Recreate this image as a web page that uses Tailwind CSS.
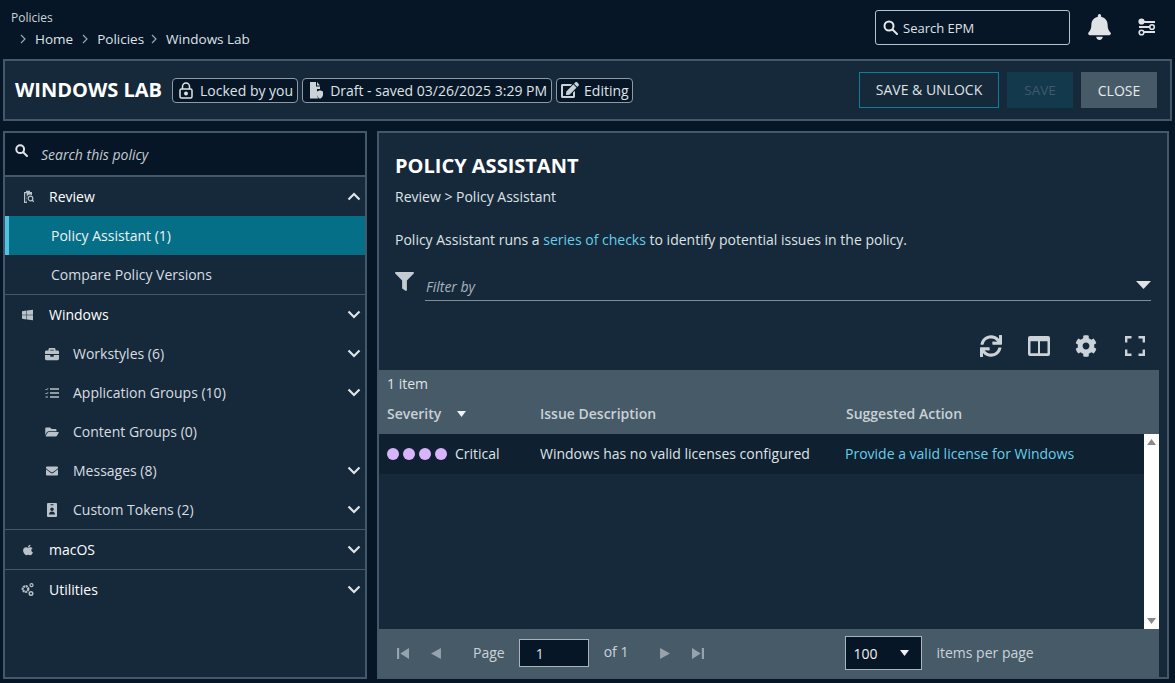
<!DOCTYPE html>
<html lang="en">
  <head>
    <script src="https://cdn.jsdelivr.net/npm/@tailwindcss/browser@4"></script>
    <meta charset="UTF-8" />
    <title>Windows Lab</title>
  </head>
  <body class="bg-[#061626] text-[14px] text-[#dfe3e6] overflow-hidden" style="font-family: 'Open Sans', sans-serif">
    <div class="w-[1175px] h-[683px] flex flex-col">
      <!-- top bar -->
      <div class="h-[59px] shrink-0 flex justify-between">
        <div class="pl-[11px] pt-[9px]">
          <div class="text-[12px] leading-[18px] text-[#ccd3d8]">Policies</div>
          <div class="flex items-center h-[20px] mt-[2px] pl-[8px] text-[13.500px]">
            <svg class="w-[8px] h-[10px] mr-[8px]" viewBox="0 0 8 10" fill="none" stroke="#9aa6af" stroke-width="1.2"><path d="M2 1l4 4-4 4"/></svg>
            <span>Home</span>
            <svg class="w-[8px] h-[10px] mx-[8px]" viewBox="0 0 8 10" fill="none" stroke="#9aa6af" stroke-width="1.2"><path d="M2 1l4 4-4 4"/></svg>
            <span>Policies</span>
            <svg class="w-[8px] h-[10px] ml-[6px] mr-[8px]" viewBox="0 0 8 10" fill="none" stroke="#9aa6af" stroke-width="1.2"><path d="M2 1l4 4-4 4"/></svg>
            <span>Windows Lab</span>
          </div>
        </div>
        <div class="flex items-start pt-[10px]">
          <div class="w-[195px] h-[35px] border border-[#b9c2c8] rounded-[3px] flex items-center pl-[7px] text-[13px]">
            <svg class="w-[15px] h-[15px] mr-[5px]" viewBox="0 0 15 15" fill="none" stroke="#e4e8ea" stroke-width="2"><circle cx="6" cy="6" r="4.5"/><path d="M9.5 9.5L14 14" stroke-linecap="round"/></svg>
            <span class="pt-[2px]">Search EPM</span>
          </div>
          <svg class="w-[23px] h-[26px] ml-[18px] mt-[4px]" viewBox="0 0 448 512" fill="#dfe3e6"><path d="M224 512c35.320 0 63.970-28.650 63.970-64H160.030c0 35.350 28.650 64 63.970 64zm215.390-149.710c-19.320-20.760-55.470-51.990-55.470-154.290 0-77.700-54.480-139.900-127.940-155.160V32c0-17.670-14.320-32-31.980-32s-31.980 14.330-31.980 32v20.840C118.560 68.100 64.080 130.300 64.080 208c0 102.300-36.150 133.530-55.470 154.290-6 6.450-8.660 14.160-8.610 21.710.11 16.400 12.980 32 32.100 32h383.800c19.120 0 32-15.600 32.100-32 .05-7.550-2.610-15.270-8.610-21.710z"/></svg>
          <svg class="w-[18px] h-[18px] ml-[27px] mt-[8px] mr-[19px]" viewBox="0 0 18 18" fill="none" stroke="#dfe3e6" stroke-width="1.600"><path d="M6 4h11M1 9h10M6 14h11" stroke-width="2"/><circle cx="3.500" cy="3.500" r="2.300" fill="#dfe3e6"/><circle cx="14" cy="9" r="2.300" fill="#061626"/><circle cx="3.500" cy="14.500" r="2.300" fill="#061626"/></svg>
        </div>
      </div>

      <!-- policy header -->
      <div class="mx-[3px] h-[62px] shrink-0 border-2 border-[#42596b] bg-[#16293a] flex items-center pl-[10px] pr-[13px]">
        <div class="text-[20px] font-bold text-white mr-[10px]">WINDOWS LAB</div>
        <div class="h-[25px] border border-[#8e9aa4] rounded-[4px] bg-[#061626] flex items-center pl-[6px] pr-[4px] mr-[4px]">
          <svg class="w-[14px] h-[17px] mr-[7px]" viewBox="0 0 14 17" fill="none" stroke="#dfe3e6" stroke-width="1.500"><rect x="1" y="7" width="12" height="9" rx="1.500"/><path d="M3.500 7V4.500a3.500 3.500 0 0 1 7 0V7"/><circle cx="7" cy="11.500" r="1.200" fill="#dfe3e6"/></svg>
          <span>Locked by you</span>
        </div>
        <div class="h-[25px] border border-[#8e9aa4] rounded-[4px] bg-[#061626] flex items-center pl-[6px] pr-[4px] mr-[4px]">
          <svg class="w-[14px] h-[17px] mr-[7px]" viewBox="0 0 14 17" fill="#ccd3d8"><path d="M1 0h6v4.500h4V7H8v5c0 2 .6 3.500 1.500 4.500H1z"/><path d="M8 0l3 3.500H8z"/><path d="M11 8l3 1.200v3c0 2-1.300 3.500-3 4.300-1.700-.8-3-2.300-3-4.300v-3z" transform="translate(0 .3)"/></svg>
          <span>Draft - saved 03/26/2025 3:29 PM</span>
        </div>
        <div class="h-[25px] border border-[#8e9aa4] rounded-[4px] bg-[#061626] flex items-center pl-[4px] pr-[3px]">
          <svg class="w-[18px] h-[16px] mr-[5px]" viewBox="0 0 576 512" fill="#ccd3d8"><path d="M402.600 83.200l90.200 90.200c3.800 3.800 3.800 10 0 13.800L274.400 405.600l-92.800 10.300c-12.400 1.400-22.900-9.100-21.500-21.500l10.300-92.800L388.800 83.200c3.800-3.800 10-3.800 13.800 0zm162-22.900l-48.800-48.800c-15.200-15.200-39.900-15.200-55.200 0l-35.400 35.400c-3.800 3.800-3.800 10 0 13.800l90.200 90.200c3.800 3.800 10 3.800 13.800 0l35.400-35.400c15.200-15.300 15.200-40 0-55.200zM384 346.200V448H64V128h229.800c3.200 0 6.200-1.300 8.500-3.500l40-40c7.600-7.600 2.200-20.500-8.500-20.500H48C21.500 64 0 85.500 0 112v352c0 26.500 21.500 48 48 48h352c26.500 0 48-21.500 48-48V306.200c0-10.700-12.900-16-20.500-8.500l-40 40c-2.200 2.300-3.500 5.300-3.500 8.500z"/></svg>
          <span>Editing</span>
        </div>
        <div class="ml-auto flex items-center text-[14px]">
          <div class="w-[140px] h-[36px] border border-[#0b7f9c] flex items-center justify-center mr-[8px] pb-[1px]">SAVE &amp; UNLOCK</div>
          <div class="w-[66px] h-[36px] bg-[#123a4c] text-[#43586a] flex items-center justify-center mr-[8px] text-[13.500px]">SAVE</div>
          <div class="w-[76px] h-[36px] bg-[#475a68] text-[#e8ebed] flex items-center justify-center">CLOSE</div>
        </div>
      </div>

      <div class="mt-[10px] ml-[3px] flex gap-[10px] h-[548px]">
        <!-- left nav -->
        <div class="w-[364px] border-2 border-[#42596b] bg-[#16293a] flex flex-col text-[#d8dde1]">
          <div class="h-[44px] shrink-0 bg-[#061626] border-b-2 border-[#42596b] flex items-center pl-[10px]">
            <svg class="w-[13px] h-[13px] mr-[13px] -mt-[8px]" viewBox="0 0 13 13" fill="none" stroke="#dfe3e6" stroke-width="2"><circle cx="5.200" cy="5.200" r="3.900"/><path d="M8.200 8.200L12 12" stroke-linecap="round"/></svg>
            <span class="italic text-[14px] text-[#c4ccd2]">Search this policy</span>
          </div>

          <div class="h-[39px] flex items-center pl-[18px] pr-[4px] text-white">
            <svg class="w-[11px] h-[13px] mr-[15px]" viewBox="0 0 11 13" fill="#b9c2c8"><path fill-rule="evenodd" d="M1 2h2V.7h4V2h2v3.300a3.600 3.600 0 0 0-5 5V13H1zM2.200 3.200v8.600h1.500V3.200z"/><circle cx="7.500" cy="8.500" r="2.300" fill="none" stroke="#b9c2c8" stroke-width="1.200"/><path d="M9 10l1.800 1.800" stroke="#b9c2c8" stroke-width="1.300"/></svg>
            <span>Review</span>
            <svg class="w-[14px] h-[9px] ml-auto" viewBox="0 0 14 9" fill="none" stroke="#dfe3e6" stroke-width="2.200"><path d="M1.500 7.500L7 2l5.500 5.500"/></svg>
          </div>
          <div class="h-[39px] flex items-center bg-[#066f88] border-l-4 border-[#4fc3df] pl-[42px] text-[#eef1f3]">Policy Assistant (1)</div>
          <div class="h-[39px] flex items-center pl-[46px]">Compare Policy Versions</div>

          <div class="h-[40px] border-t border-[#42596b] flex items-center pl-[17px] pr-[4px] text-white">
            <svg class="w-[11px] h-[12px] mr-[16px]" viewBox="0 0 448 512" preserveAspectRatio="none" fill="#b9c2c8"><path d="M0 93.700l183.600-25.300v177.400H0V93.700zm0 324.600l183.600 25.300V268.400H0v149.900zm203.800 28L448 480V268.400H203.800v177.900zm0-380.600v180.100H448V32L203.800 65.700z"/></svg>
            <span>Windows</span>
            <svg class="w-[14px] h-[9px] ml-auto" viewBox="0 0 14 9" fill="none" stroke="#dfe3e6" stroke-width="2.200"><path d="M1.500 1.500L7 7l5.500-5.500"/></svg>
          </div>

          <div class="h-[39px] flex items-center pl-[40px] pr-[4px]">
            <svg class="w-[14px] h-[14px] mr-[14px]" viewBox="0 0 512 512" fill="#b9c2c8"><path d="M320 336c0 8.840-7.160 16-16 16h-96c-8.840 0-16-7.160-16-16v-48H0v144c0 25.600 22.400 48 48 48h416c25.600 0 48-22.400 48-48V288H320v48zm144-208h-80V80c0-25.600-22.400-48-48-48H176c-25.600 0-48 22.400-48 48v48H48c-25.600 0-48 22.400-48 48v80h512v-80c0-25.600-22.400-48-48-48zm-144 0H192V96h128v32z"/></svg>
            <span>Workstyles (6)</span>
            <svg class="w-[14px] h-[9px] ml-auto" viewBox="0 0 14 9" fill="none" stroke="#dfe3e6" stroke-width="2.200"><path d="M1.500 1.500L7 7l5.500-5.500"/></svg>
          </div>
          <div class="h-[39px] flex items-center pl-[40px] pr-[4px]">
            <svg class="w-[14px] h-[10px] mr-[14px]" viewBox="0 0 14 10" fill="none" stroke="#b9c2c8"><path d="M5 1h9M5 5h9M5 9h9" stroke-width="1.500"/><path d="M.5 1l1 1L3 .3M.5 5l1 1L3 4.300M.5 9h2.500" stroke-width="1"/></svg>
            <span>Application Groups (10)</span>
            <svg class="w-[14px] h-[9px] ml-auto" viewBox="0 0 14 9" fill="none" stroke="#dfe3e6" stroke-width="2.200"><path d="M1.500 1.500L7 7l5.500-5.500"/></svg>
          </div>
          <div class="h-[39px] flex items-center pl-[40px] pr-[4px]">
            <svg class="w-[14px] h-[12px] mr-[14px]" viewBox="0 0 576 512" fill="#b9c2c8"><path d="M572.694 292.093L500.270 416.248A63.997 63.997 0 0 1 444.989 448H45.025c-18.523 0-30.064-20.093-20.731-36.093l72.424-124.155A64 64 0 0 1 152 256h399.964c18.523 0 30.064 20.093 20.730 36.093zM152 224h328v-48c0-26.510-21.490-48-48-48H272l-64-64H48C21.490 64 0 85.490 0 112v278.046l69.077-118.418C86.214 242.250 117.989 224 152 224z"/></svg>
            <span>Content Groups (0)</span>
          </div>
          <div class="h-[39px] flex items-center pl-[41px] pr-[4px]">
            <svg class="w-[12px] h-[12px] mr-[15px]" viewBox="0 0 512 512" fill="#b9c2c8"><path d="M502.300 190.800c3.900-3.100 9.700-.2 9.700 4.700V400c0 26.500-21.500 48-48 48H48c-26.500 0-48-21.500-48-48V195.600c0-5 5.700-7.800 9.700-4.700 22.400 17.400 52.100 39.500 154.100 113.600 21.100 15.400 56.700 47.800 92.200 47.600 35.700.3 72-32.800 92.300-47.600 102-74.100 131.600-96.300 154-113.700zM256 320c23.200.4 56.600-29.200 73.400-41.400 132.700-96.300 142.800-104.700 173.400-128.700 5.800-4.500 9.200-11.500 9.200-18.900v-19c0-26.500-21.500-48-48-48H48C21.500 64 0 85.500 0 112v19c0 7.400 3.400 14.300 9.200 18.900 30.600 23.900 40.700 32.400 173.400 128.700 16.800 12.200 50.200 41.800 73.400 41.400z"/></svg>
            <span>Messages (8)</span>
            <svg class="w-[14px] h-[9px] ml-auto" viewBox="0 0 14 9" fill="none" stroke="#dfe3e6" stroke-width="2.200"><path d="M1.500 1.500L7 7l5.500-5.500"/></svg>
          </div>
          <div class="h-[39px] flex items-center pl-[41px] pr-[4px]">
            <svg class="w-[12px] h-[14px] mr-[15px]" viewBox="0 0 10 14" fill="#b9c2c8"><path d="M1 0h8a1 1 0 0 1 1 1v12a1 1 0 0 1-1 1H1a1 1 0 0 1-1-1V1a1 1 0 0 1 1-1zM3.500 1.300v1h3v-1zM5 4.500a1.800 1.800 0 1 0 0 3.600 1.800 1.800 0 0 0 0-3.600zM2 11.500h6c0-1.800-1.300-3-3-3s-3 1.200-3 3z" fill-rule="evenodd"/></svg>
            <span>Custom Tokens (2)</span>
            <svg class="w-[14px] h-[9px] ml-auto" viewBox="0 0 14 9" fill="none" stroke="#dfe3e6" stroke-width="2.200"><path d="M1.500 1.500L7 7l5.500-5.500"/></svg>
          </div>

          <div class="h-[40px] border-t border-[#42596b] flex items-center pl-[18px] pr-[4px] text-white">
            <svg class="w-[10px] h-[12px] mr-[16px]" viewBox="0 0 384 512" preserveAspectRatio="none" fill="#b9c2c8"><path d="M318.700 268.700c-.2-36.700 16.400-64.400 50-84.800-18.800-26.900-47.200-41.700-84.700-44.600-35.500-2.800-74.300 20.700-88.500 20.700-15 0-49.400-19.700-76.400-19.700C63.300 141.200 4 184.800 4 273.500q0 39.300 14.400 81.200c12.800 36.700 59 126.700 107.200 125.200 25.200-.6 43-17.900 75.800-17.900 31.800 0 48.300 17.900 76.400 17.900 48.600-.7 90.400-82.500 102.600-119.300-65.200-30.700-61.700-90-61.700-91.900zm-56.600-164.200c27.300-32.400 24.800-61.900 24-72.500-24.100 1.400-52 16.400-67.900 34.900-17.500 19.800-27.800 44.300-25.600 71.900 26.100 2 49.900-11.400 69.500-34.300z"/></svg>
            <span>macOS</span>
            <svg class="w-[14px] h-[9px] ml-auto" viewBox="0 0 14 9" fill="none" stroke="#dfe3e6" stroke-width="2.200"><path d="M1.500 1.500L7 7l5.500-5.500"/></svg>
          </div>
          <div class="h-[40px] border-t border-[#42596b] flex items-center pl-[16px] pr-[4px] text-white">
            <svg class="w-[13px] h-[13px] mr-[15px]" viewBox="0 0 13 13" fill="none" stroke="#b9c2c8"><circle cx="4.500" cy="6" r="2.800" stroke-width="2.200" stroke-dasharray="2 .6"/><circle cx="10.500" cy="2.200" r="1.500" stroke-width="1.200"/><circle cx="10" cy="10.500" r="1.800" stroke-width="1.400"/></svg>
            <span>Utilities</span>
            <svg class="w-[14px] h-[9px] ml-auto" viewBox="0 0 14 9" fill="none" stroke="#dfe3e6" stroke-width="2.200"><path d="M1.500 1.500L7 7l5.500-5.500"/></svg>
          </div>
        </div>

        <!-- policy assistant -->
        <div class="w-[792px] border-2 border-[#42596b] bg-[#16293a] flex flex-col pr-[8px]">
          <div class="h-[237px] shrink-0 flex flex-col">
            <div class="pl-[16px] pt-[19px] text-[20px] leading-[27px] font-bold text-white">POLICY ASSISTANT</div>
            <div class="pl-[16px] mt-[8px] leading-[20px]">Review &gt; Policy Assistant</div>
            <div class="pl-[16px] mt-[23px] leading-[20px]">Policy Assistant runs a <span class="text-[#66cfe8]">series of checks</span> to identify potential issues in the policy.</div>
            <div class="ml-[16px] mt-[22px] flex items-start">
              <svg class="w-[19px] h-[19px]" viewBox="0 0 512 512" fill="#c4ccd2"><path d="M487.976 0H24.028C2.710 0-8.047 25.866 7.058 40.971L192 225.941V432c0 7.831 3.821 15.170 10.237 19.662l80 55.980C298.020 518.690 320 507.493 320 487.980V225.941l184.947-184.970C520.021 25.896 509.338 0 487.976 0z"/></svg>
              <div class="ml-[11px] w-[726px] h-[29px] border-b border-[#7d8c97] flex items-center justify-between pl-[1px]">
                <span class="italic text-[14px] text-[#a9b3ba]">Filter by</span>
                <svg class="w-[15px] h-[8px] mb-[2px]" viewBox="0 0 15 8" fill="#dfe3e6"><path d="M0 0h15L7.500 8z"/></svg>
              </div>
            </div>
            <div class="mt-auto flex justify-end items-center pb-[13px] pr-[14px]">
              <svg class="w-[22px] h-[22px]" viewBox="0 0 512 512" fill="#ccd3d8"><path d="M440.650 12.570l4 82.770A247.160 247.160 0 0 0 255.830 8C134.730 8 33.910 94.920 12.290 209.820A12 12 0 0 0 24.090 224h49.050a12 12 0 0 0 11.670-9.260 175.910 175.910 0 0 1 317-56.940l-101.460-4.860a12 12 0 0 0-12.570 12v47.410a12 12 0 0 0 12 12H500a12 12 0 0 0 12-12V12a12 12 0 0 0-12-12h-47.370a12 12 0 0 0-11.980 12.570zM255.830 432a175.610 175.610 0 0 1-146-77.800l101.800 4.870a12 12 0 0 0 12.570-12v-47.400a12 12 0 0 0-12-12H12a12 12 0 0 0-12 12V500a12 12 0 0 0 12 12h47.350a12 12 0 0 0 12-12.600l-4.150-82.570A247.170 247.170 0 0 0 255.830 504c121.110 0 221.930-86.920 243.550-201.820a12 12 0 0 0-11.800-14.180h-49.050a12 12 0 0 0-11.670 9.260A175.860 175.860 0 0 1 255.830 432z"/></svg>
              <svg class="w-[22px] h-[20px] ml-[26px]" viewBox="0 0 22 19" preserveAspectRatio="none" fill="#ccd3d8"><path fill-rule="evenodd" d="M2 0h18a2 2 0 0 1 2 2v15a2 2 0 0 1-2 2H2a2 2 0 0 1-2-2V2a2 2 0 0 1 2-2zM2.500 5v11.500H10V5zM12 5v11.500h7.500V5z"/></svg>
              <svg class="w-[22px] h-[22px] ml-[25px]" viewBox="0 0 512 512" fill="#ccd3d8"><path d="M487.400 315.700l-42.600-24.600c4.300-23.200 4.300-47 0-70.200l42.600-24.600c4.900-2.800 7.100-8.600 5.500-14-11.100-35.600-30-67.800-54.700-94.600-3.800-4.100-10-5.100-14.800-2.300L380.800 110c-17.900-15.400-38.500-27.300-60.800-35.100V25.800c0-5.600-3.900-10.500-9.400-11.700-36.700-8.200-74.300-7.800-109.200 0-5.500 1.200-9.400 6.100-9.400 11.700V75c-22.200 7.900-42.800 19.800-60.800 35.100L88.700 85.500c-4.900-2.800-11-1.900-14.800 2.300-24.700 26.700-43.600 58.900-54.700 94.600-1.700 5.400.6 11.200 5.500 14L67.300 221c-4.300 23.200-4.300 47 0 70.200l-42.600 24.600c-4.900 2.800-7.100 8.600-5.500 14 11.100 35.600 30 67.800 54.700 94.600 3.800 4.100 10 5.100 14.800 2.300l42.600-24.600c17.900 15.400 38.500 27.300 60.800 35.100v49.200c0 5.600 3.900 10.500 9.400 11.700 36.700 8.200 74.300 7.800 109.200 0 5.500-1.200 9.400-6.100 9.400-11.700v-49.200c22.200-7.900 42.800-19.800 60.800-35.100l42.600 24.600c4.900 2.800 11 1.900 14.800-2.300 24.700-26.700 43.600-58.900 54.700-94.600 1.500-5.500-.7-11.300-5.600-14.100zM256 336c-44.100 0-80-35.900-80-80s35.900-80 80-80 80 35.900 80 80-35.900 80-80 80z"/></svg>
              <svg class="w-[20px] h-[20px] ml-[28px]" viewBox="0 0 20 20" fill="none" stroke="#ccd3d8" stroke-width="2.400"><path d="M1.200 6.500V1.200h5.300M13.500 1.200h5.300v5.300M18.800 13.500v5.300h-5.300M6.500 18.800H1.200v-5.300"/></svg>
            </div>
          </div>

          <!-- table -->
          <div class="flex-1 flex flex-col min-h-0">
            <div class="h-[64px] shrink-0 bg-[#475a68] pl-[8px] relative">
              <div class="pt-[4px] text-[14px] leading-[20px]">1 item</div>
              <div class="flex items-center mt-[10px] leading-[20px] font-semibold text-[#c9d1d6] text-[14px]">
                <span class="w-[70px]">Severity</span>
                <svg class="w-[9px] h-[6px]" viewBox="0 0 9 6" fill="#f0f2f3"><path d="M0 0h9L4.500 6z"/></svg>
                <span class="ml-[74px] w-[306px]">Issue Description</span>
                <span>Suggested Action</span>
              </div>
            </div>
            <div class="flex-1 flex min-h-0">
              <div class="flex-1">
                <div class="h-[40px] bg-[#0f2030] flex items-center pl-[8px] pb-[1px]">
                  <div class="flex gap-[4px] w-[68px]">
                    <span class="w-[12px] h-[12px] rounded-full bg-[#d8b4fe]"></span>
                    <span class="w-[12px] h-[12px] rounded-full bg-[#d8b4fe]"></span>
                    <span class="w-[12px] h-[12px] rounded-full bg-[#d8b4fe]"></span>
                    <span class="w-[12px] h-[12px] rounded-full bg-[#d8b4fe]"></span>
                  </div>
                  <span class="w-[85px]">Critical</span>
                  <span class="w-[305px]">Windows has no valid licenses configured</span>
                  <span class="text-[#66cfe8]">Provide a valid license for Windows</span>
                </div>
              </div>
              <div class="w-[15px] bg-white flex flex-col justify-between items-center py-[5px]">
                <svg class="w-[9px] h-[6px]" viewBox="0 0 9 6" fill="#8a8a8a"><path d="M0 6h9L4.500 0z"/></svg>
                <svg class="w-[9px] h-[6px]" viewBox="0 0 9 6" fill="#8a8a8a"><path d="M0 0h9L4.500 6z"/></svg>
              </div>
            </div>
            <!-- pager -->
            <div class="h-[48px] shrink-0 bg-[#475a68] flex items-center pl-[18px] text-[14px] text-[#ccd3d8]">
              <svg class="w-[12px] h-[11px]" viewBox="0 0 11 10" fill="#97a3ac"><path d="M0 0h2v10H0zM11 0v10L3 5z"/></svg>
              <svg class="w-[10px] h-[11px] ml-[22px]" viewBox="0 0 9 10" fill="#97a3ac"><path d="M9 0v10L0 5z"/></svg>
              <span class="ml-[32px] -mt-[2px]">Page</span>
              <div class="ml-[14px] w-[70px] h-[28px] bg-[#061626] border border-[#a9b3ba] flex items-center pl-[16px] text-[#dfe3e6]">1</div>
              <span class="ml-[15px] -mt-[3px]">of 1</span>
              <svg class="w-[10px] h-[11px] ml-[32px]" viewBox="0 0 9 10" fill="#97a3ac"><path d="M0 0v10l9-5z"/></svg>
              <svg class="w-[12px] h-[11px] ml-[22px]" viewBox="0 0 11 10" fill="#97a3ac"><path d="M0 0v10l8-5zM9 0h2v10H9z"/></svg>
              <div class="ml-[141px] w-[77px] h-[34px] bg-[#061626] border border-[#a9b3ba] flex items-center justify-between pl-[7px] pr-[12px] text-[14px] text-[#eef1f3]">
                <span>100</span>
                <svg class="w-[9px] h-[6px]" viewBox="0 0 9 6" fill="#f0f2f3"><path d="M0 0h9L4.500 6z"/></svg>
              </div>
              <span class="ml-[14px] -mt-[1px]">items per page</span>
            </div>
          </div>
        </div>
      </div>
    </div>
  </body>
</html>
